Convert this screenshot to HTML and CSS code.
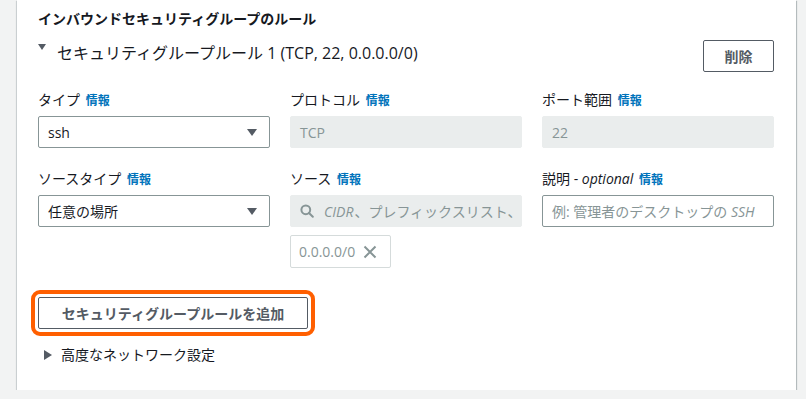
FILE: index.html
```html
<!DOCTYPE html>
<html lang="ja">
<head>
  <meta charset="UTF-8" />
  <title>インバウンドセキュリティグループのルール</title>
  <link rel="stylesheet" href="styles.css">
</head>
<body>

<div class="card">
  <div class="card-title">インバウンドセキュリティグループのルール</div>

  <div class="rule-head">
    <div class="rule-name"><span class="caret-down"></span>セキュリティグループルール 1 (TCP, 22, 0.0.0.0/0)</div>
    <button class="btn">削除</button>
  </div>

  <div class="grid">
    <div class="field">
      <div class="label">タイプ <a class="info">情報</a></div>
      <div class="select">ssh<span class="arrow"></span></div>
    </div>
    <div class="field">
      <div class="label">プロトコル <a class="info">情報</a></div>
      <div class="input disabled">TCP</div>
    </div>
    <div class="field">
      <div class="label">ポート範囲 <a class="info">情報</a></div>
      <div class="input disabled">22</div>
    </div>

    <div class="field">
      <div class="label">ソースタイプ <a class="info">情報</a></div>
      <div class="select">任意の場所<span class="arrow"></span></div>
    </div>
    <div class="field">
      <div class="label">ソース <a class="info">情報</a></div>
      <div class="input disabled search">
        <svg class="search-icon" width="14" height="14" viewBox="0 0 14 14">
          <circle cx="5.8" cy="5.8" r="4.4" fill="none" stroke="#879596" stroke-width="2"/>
          <line x1="9" y1="9" x2="12.8" y2="12.8" stroke="#879596" stroke-width="2" stroke-linecap="round"/>
        </svg>
        <span class="ph"><i>CIDR</i>、プレフィックスリスト、</span>
      </div>
      <div class="token">0.0.0.0/0
        <svg width="14" height="14" viewBox="0 0 14 14">
          <path d="M1.5 1.5 L12.5 12.5 M12.5 1.5 L1.5 12.5" stroke="#879596" stroke-width="2" fill="none"/>
        </svg>
      </div>
    </div>
    <div class="field">
      <div class="label">説明 - <i>optional</i> <a class="info">情報</a></div>
      <div class="input placeholder">例: 管理者のデスクトップの&nbsp;<i>SSH</i></div>
    </div>
  </div>

  <button class="btn add-btn">セキュリティグループルールを追加</button>

  <div class="advanced"><span class="caret-right"></span>高度なネットワーク設定</div>
</div>

</body>
</html>
```

FILE: styles.css
```css
body {
  font-family: 'Open Sans', 'Noto Sans CJK JP', sans-serif;
  background: #f2f3f3;
  margin: 0;
  color: #16191f;
  font-size: 14px;
}
.card {
  margin-left: 17px;
  width: 779px;
  height: 390px;
  box-sizing: border-box;
  background: #fff;
  padding: 8px 22px 0 21px;
  box-shadow: 0 1px 1px 0 rgba(0, 28, 36, 0.4), 1px 1px 1px 0 rgba(0, 28, 36, 0.2), -1px 1px 1px 0 rgba(0, 28, 36, 0.1);
}
.card-title {
  font-weight: bold;
  line-height: 22px;
}
.rule-head {
  display: flex;
  justify-content: space-between;
  align-items: flex-start;
  margin-top: 10px;
}
.rule-name {
  font-size: 16px;
  line-height: 22px;
  padding-top: 2px;
  display: flex;
}
.caret-down {
  width: 0;
  height: 0;
  border-left: 4px solid transparent;
  border-right: 4px solid transparent;
  border-top: 6px solid #545b64;
  margin: 2px 11px 0 0;
}
.btn {
  font-family: inherit;
  font-size: 14px;
  font-weight: bold;
  color: #545b64;
  background: #fff;
  border: 1px solid #545b64;
  border-radius: 2px;
  height: 32px;
  padding: 0 20px;
  width: 71px;
}
.grid {
  display: grid;
  grid-template-columns: repeat(3, 232px);
  column-gap: 20px;
  row-gap: 20px;
  margin-top: 17px;
}
.label {
  line-height: 22px;
  margin-bottom: 4px;
}
.info {
  color: #0073bb;
  font-weight: bold;
  font-size: 12px;
  margin-left: 2px;
}
.select, .input {
  box-sizing: border-box;
  height: 32px;
  border: 1px solid #879596;
  border-radius: 2px;
  padding: 0 9px;
  display: flex;
  align-items: center;
  position: relative;
  white-space: nowrap;
  overflow: hidden;
}
.arrow {
  position: absolute;
  right: 12px;
  top: 12px;
  width: 0;
  height: 0;
  border-left: 5px solid transparent;
  border-right: 5px solid transparent;
  border-top: 7px solid #545b64;
}
.input.disabled {
  background: #eaeded;
  border-color: #eaeded;
  color: #879596;
}
.input.placeholder {
  color: #879596;
}
.search-icon {
  flex: none;
  margin-right: 10px;
}
.ph i {
  margin-right: 1px;
}
.token {
  margin-top: 8px;
  box-sizing: border-box;
  width: 101px;
  height: 33px;
  border: 1px solid #d5dbdb;
  border-radius: 2px;
  color: #879596;
  display: flex;
  align-items: center;
  gap: 8px;
  padding-left: 8px;
}
.add-btn {
  width: 270px;
  margin-top: 29px;
  display: block;
  outline: 4px solid #ff5f00;
  outline-offset: 3px;
}
.advanced {
  display: flex;
  align-items: center;
  margin-top: 15px;
  margin-left: 6px;
  line-height: 22px;
}
.caret-right {
  width: 0;
  height: 0;
  border-top: 5px solid transparent;
  border-bottom: 5px solid transparent;
  border-left: 8px solid #545b64;
  margin-right: 9px;
}
```
